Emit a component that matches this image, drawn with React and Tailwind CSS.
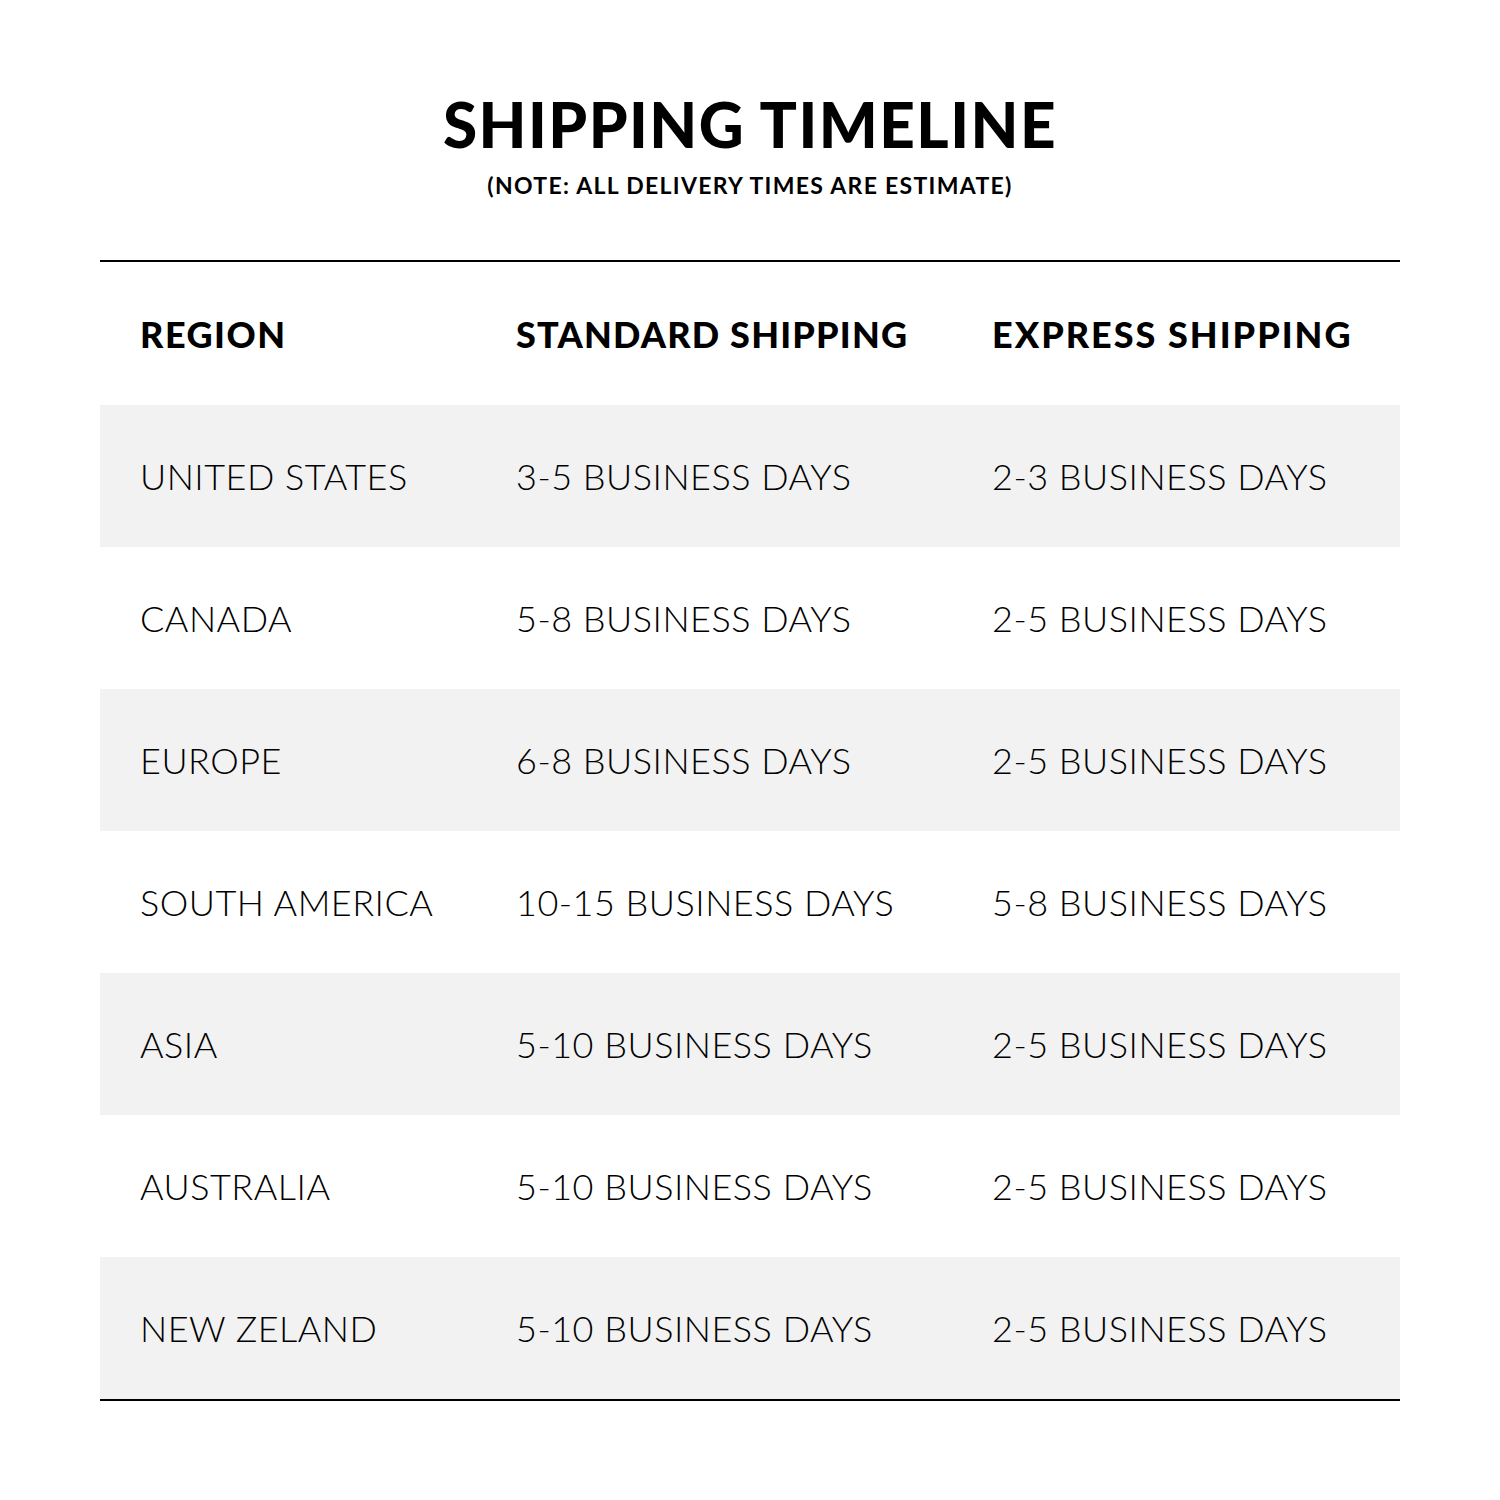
const rows = [
	[ 'UNITED STATES', '3-5 BUSINESS DAYS', '2-3 BUSINESS DAYS' ],
	[ 'CANADA', '5-8 BUSINESS DAYS', '2-5 BUSINESS DAYS' ],
	[ 'EUROPE', '6-8 BUSINESS DAYS', '2-5 BUSINESS DAYS' ],
	[ 'SOUTH AMERICA', '10-15 BUSINESS DAYS', '5-8 BUSINESS DAYS' ],
	[ 'ASIA', '5-10 BUSINESS DAYS', '2-5 BUSINESS DAYS' ],
	[ 'AUSTRALIA', '5-10 BUSINESS DAYS', '2-5 BUSINESS DAYS' ],
	[ 'NEW ZELAND', '5-10 BUSINESS DAYS', '2-5 BUSINESS DAYS' ],
];

const cols = 'grid grid-cols-[376px_476px_1fr]';

const App = () => {
	return (
		<div className="w-[1500px] h-[1500px] bg-white text-black font-['Lato',sans-serif] px-[100px] pt-[92px]">
			{ /* Title */ }
			<div className="flex flex-col items-center">
				<h1 className="text-[62px] leading-[64px] font-black tracking-[1.5px]">
					SHIPPING TIMELINE
				</h1>
				<p className="mt-[17px] text-[23px] leading-[24px] font-bold tracking-[1.3px]">
					(NOTE: ALL DELIVERY TIMES ARE ESTIMATE)
				</p>
			</div>

			{ /* Table */ }
			<div className="mt-[63px] border-t-2 border-b-2 border-black">
				<div className={ `${ cols } h-[143px] items-center` }>
					<div className="pl-10 text-[36px] font-black tracking-[1.5px]">REGION</div>
					<div className="pl-10 text-[36px] font-black tracking-[1.2px]">STANDARD SHIPPING</div>
					<div className="pl-10 text-[36px] font-black tracking-[2px]">EXPRESS SHIPPING</div>
				</div>
				{ rows.map( ( row, i ) => (
					<div
						key={ row[ 0 ] }
						className={ `${ cols } h-[142px] items-center ${ i % 2 === 0 ? 'bg-[#f2f2f2]' : 'bg-white' }` }
					>
						{ row.map( ( cell, j ) => (
							<div key={ j } className="pl-10 text-[36px] font-light tracking-[0.5px]">
								{ cell }
							</div>
						) ) }
					</div>
				) ) }
			</div>
		</div>
	);
};

export default App;
